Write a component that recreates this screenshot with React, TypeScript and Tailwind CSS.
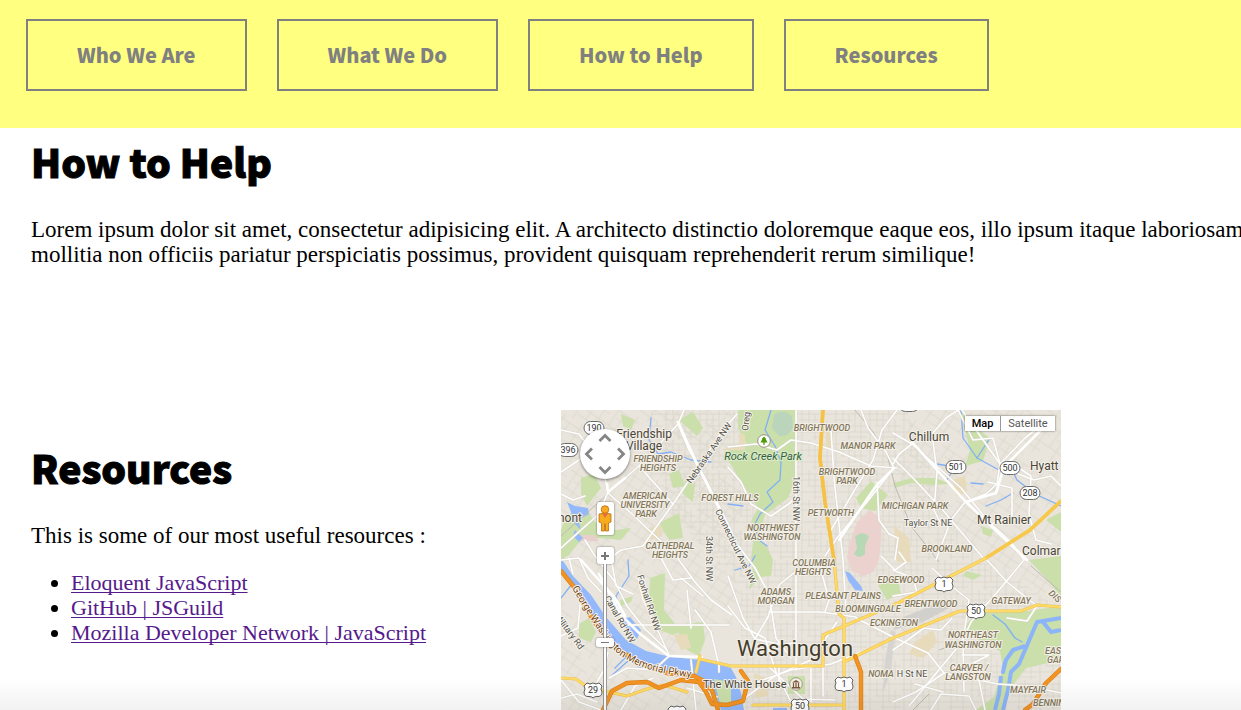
import React from "react";

const navItems = [
  { label: "Who We Are", href: "#who-we-are" },
  { label: "What We Do", href: "#what-we-do" },
  { label: "How to Help", href: "#how-to-help" },
  { label: "Resources", href: "#resources" },
];

const resourceLinks = [
  { label: "Eloquent JavaScript", href: "#eloquent-javascript" },
  { label: "GitHub | JSGuild", href: "#github-jsguild" },
  { label: "Mozilla Developer Network | JavaScript", href: "#mdn-javascript" },
];

const parks = [
  "M177 0H235V68L227 88L204 105L197 128L190 111L197 98L180 71L167 50V41L187 36L177 18Z",
  "M193 128L205 135L212 150L210 166L199 167L188 180L192 160L190 148Z",
  "M89 168L104 163L103 200L115 215L130 217L112 225L98 220L88 190Z",
  "M114 215L142 212L144 230L138 246L126 240Z",
  "M417 203L460 202L500 196V250L465 258L452 275L442 300H415L433 287L442 258L439 241L409 225L404 215Z",
  "M468 150L500 146V187L485 168Z",
  "M399 0H402L415 18L429 28L422 51L404 56L409 40Z",
  "M332 73L352 68L375 68L389 74L370 75L350 73L334 78Z",
  "M295 88L310 71L327 85L314 101L300 98Z",
  "M3 112L14 98L26 100L34 112L55 120L70 118L60 130L38 128L20 130L8 145L0 150V120Z",
  "M20 68L33 64L40 78L26 96L20 84Z",
  "M108 64L118 60L124 76L112 78Z",
  "M124 70L134 74L132 92L122 84Z",
  "M98 113L118 103L122 128L108 130Z",
  "M18 214L28 208L35 222L30 232L18 228Z",
  "M59 190L72 186L70 192L60 196Z",
  "M153 270L170 268V295L158 292Z",
  "M227 266H244V284H227Z",
  "M317 175L337 170L340 184L326 190Z",
  "M405 161L421 165L412 170L402 166Z",
  "M420 116L432 120L430 127L422 124Z",
  "M60 4L74 10L70 20L62 16Z",
  "M118 10L132 2L142 18L136 26Z",
  "M485 110L500 102V122Z",
];

const sand = [
  "M86 119L100 114L101 126L90 130Z",
  "M113 225L126 224L130 238L120 240Z",
  "M354 232L372 220L376 232L362 248L348 244Z",
  "M265 22H272V38H265Z",
  "M391 70L404 66L406 82L396 86Z",
  "M333 116L348 128L350 152H336Z",
  "M160 40L178 34V24H184V40Z",
  "M193 263L205 268L207 286L194 288Z",
];

const water = [
  "M0 148L12 166L30 185L45 207L65 230L85 241L110 247L140 250L170 258L175 267L180 283L183 300H160L152 278L136 266L105 263L80 259L60 245L40 224L25 196L8 173L0 162Z",
  "M62 209L69 207L80 220L76 229L64 217Z",
  "M284 161L289 163L300 176L302 181L294 180L287 170Z",
  "M6 92L14 96L27 98L28 104L17 110L20 120L12 112L10 102Z",
  "M14 120L22 128L18 132L12 126Z",
  "M212 298H226V300H212Z",
];

const minorRoads = [
  "M0 20L18 24L30 40L42 60L47 82L38 104L20 120L0 138",
  "M47 83L78 56L117 14L123 0",
  "M117 14L128 40L146 72L166 112L176 134L194 158",
  "M47 83L70 103L91 123L82 136L60 140L52 146",
  "M91 123L112 94L135 60L162 20L176 4",
  "M78 56L112 94",
  "M91 123L112 142L134 172L150 190L171 205",
  "M0 62L18 50L30 40M0 84L12 90L24 86",
  "M0 150L18 148L27 168L40 182",
  "M77 168L82 190L93 212L108 245",
  "M66 215H168M126 180L130 218M120 168L142 186M134 200L150 222L158 256V262",
  "M24 130L34 146L54 172L66 196L84 219L106 240",
  "M50 148L55 176L72 184M100 148L112 170L130 168",
  "M235 0V260",
  "M167 37L195 34L216 40L230 30L250 33L278 42L310 56L336 58",
  "M167 57L180 72L190 94L210 106L229 93L235 86",
  "M300 0L307 18L325 42L333 58",
  "M336 0L321 20L312 50L296 76L270 120",
  "M333 58L306 92L276 128L264 146",
  "M270 20L273 68L282 150L285 200",
  "M316 72L318 110L328 124L337 128L334 150",
  "M320 146L334 160L345 152L338 142",
  "M167 166L182 208L194 229L218 234L234 233",
  "M194 229L207 207L218 175L234 162",
  "M167 196L184 218L204 228L215 262L234 300",
  "M208 202L260 202L295 207M260 160L268 190L264 202",
  "M194 158L208 184L215 228L230 248",
  "M181 290L214 266L250 250L276 212",
  "M196 272L230 260L270 254L300 242",
  "M208 257L242 289L274 290M218 257V280M250 257V292M262 257V286",
  "M295 208L334 228L367 243L383 263L437 274L467 276L500 283",
  "M332 23L351 34L400 78L427 111L450 132L463 150",
  "M332 48L352 68L380 98L412 136L424 150",
  "M332 54L338 44L351 34M371 24L385 8L397 0",
  "M397 0L412 30L432 28L439 54L436 74L425 84L404 92L390 110L375 150",
  "M439 54L464 28L492 6M455 56L470 66L468 104L475 130L490 134",
  "M427 72L451 78L451 108L430 114M371 24L376 62L373 100L380 114",
  "M439 54L452 62L473 70L490 66L500 76M401 0L439 54",
  "M371 158L388 174L408 190L402 232L403 282",
  "M426 150L446 172L476 196L466 211L446 208",
  "M463 150L438 180L410 212L401 232L348 296",
  "M332 240L348 229L363 218L380 220L391 208",
  "M332 186L356 182L352 168L332 160",
  "M401 245H428L403 258M383 263L355 282L332 292",
  "M0 270L18 292L40 300M48 268L66 258L93 260L108 246",
  "M0 288L16 284L36 292M60 300L74 276L92 268M130 250L135 300M126 278L156 287",
  "M20 185L17 218L0 226M8 148L12 164M47 242L43 260L36 272",
  "M370 300L380 284L408 286L415 300M418 270L424 300M354 274L382 282",
];

const majorRoads = [
  "M46 74L47 82L64 68M117 12L136 54L170 122",
  "M38 164L60 205L78 223L108 246L141 247",
  "M333 58L315 76L278 130",
  "M351 32L404 91L466 150",
  "M405 92L435 83L443 57M443 57L492 8",
  "M20 150L54 188L64 206",
];

const yellowRoads = [
  "M262 0L259 48L264 92L273 150L278 204L283 208V300",
  "M138 249L170 256H262V225L337 193L425 148L469 120L500 91",
  "M283 252L332 228L399 201H460L476 195L500 197",
  "M0 268L15 269L26 277L44 281L66 286L86 279L103 275L126 282",
  "M192 295H283",
  "M139 246L135 262",
];

const orangeRoads = [
  "M0 161L13 177L24 197L40 222L58 240L80 254L106 263L133 266L143 271",
  "M42 300L51 281L66 273L86 272L98 278L120 270L138 272L145 282L151 294L166 295L182 291L187 271L180 261",
  "M138 272L151 280L157 300",
  "M294 246L300 262V300",
  "M500 259L485 273L472 294L464 300",
];

const creeks = [
  "M210 0L204 20L214 36L220 52L219 70L206 82L212 92L199 104L193 116L198 130L206 136",
  "M400 0L402 28L416 48L438 60L450 58L456 70L474 84L500 96",
  "M429 28L416 48M370 53L394 57L386 70M425 96L440 90L452 83",
  "M410 73L422 74M67 150L68 166L55 186L57 196",
  "M0 188L14 170M54 258L64 248",
  "M90 8L88 30L97 44L110 42L130 50L150 52",
  "M48 268L68 250M432 205L444 214L454 228L461 232",
  "M167 94L182 96M174 160L188 156L194 146",
];

type AreaLabel = { x: number; y: number; text: string; anchor?: "start" | "middle" | "end" };

const areaLabels: AreaLabel[] = [
  { x: 97, y: 52, text: "FRIENDSHIP" },
  { x: 97, y: 61, text: "HEIGHTS" },
  { x: 84, y: 89, text: "AMERICAN" },
  { x: 84, y: 98, text: "UNIVERSITY" },
  { x: 85, y: 107, text: "PARK" },
  { x: 109, y: 139, text: "CATHEDRAL" },
  { x: 109, y: 148, text: "HEIGHTS" },
  { x: 169, y: 91, text: "FOREST HILLS" },
  { x: 261, y: 21, text: "BRIGHTWOOD" },
  { x: 307, y: 39, text: "MANOR PARK" },
  { x: 286, y: 65, text: "BRIGHTWOOD" },
  { x: 286, y: 74, text: "PARK" },
  { x: 270, y: 106, text: "PETWORTH" },
  { x: 212, y: 121, text: "NORTHWEST" },
  { x: 211, y: 130, text: "WASHINGTON" },
  { x: 354, y: 99, text: "MICHIGAN PARK" },
  { x: 386, y: 142, text: "BROOKLAND" },
  { x: 253, y: 156, text: "COLUMBIA" },
  { x: 252, y: 165, text: "HEIGHTS" },
  { x: 215, y: 185, text: "ADAMS" },
  { x: 215, y: 194, text: "MORGAN" },
  { x: 282, y: 189, text: "PLEASANT PLAINS" },
  { x: 307, y: 202, text: "BLOOMINGDALE" },
  { x: 340, y: 173, text: "EDGEWOOD" },
  { x: 333, y: 216, text: "ECKINGTON" },
  { x: 370, y: 197, text: "BRENTWOOD" },
  { x: 450, y: 194, text: "GATEWAY" },
  { x: 412, y: 228, text: "NORTHEAST" },
  { x: 412, y: 238, text: "WASHINGTON" },
  { x: 408, y: 261, text: "CARVER /" },
  { x: 407, y: 270, text: "LANGSTON" },
  { x: 320, y: 267, text: "NOMA" },
  { x: 484, y: 244, text: "EAS", anchor: "start" },
  { x: 486, y: 253, text: "GAR", anchor: "start" },
  { x: 467, y: 283, text: "MAYFAIR" },
  { x: 472, y: 296, text: "BENNIN", anchor: "start" },
];

const stateRoutes = [
  { x: 7, y: 40, n: "396" },
  { x: 33, y: 18, n: "190" },
  { x: 395, y: 57, n: "501" },
  { x: 449, y: 58, n: "500" },
  { x: 469, y: 83, n: "208" },
  { x: 348, y: -5, n: "" },
];

const usRoutes = [
  { x: 383, y: 174, n: "1" },
  { x: 415, y: 201, n: "50" },
  { x: 283, y: 274, n: "1" },
  { x: 239, y: 296, n: "50" },
  { x: 32, y: 280, n: "29" },
  { x: 116, y: 303, n: "" },
];

function Lines({ paths, className, width }: { paths: string[]; className: string; width: number }) {
  return (
    <g className={className} fill="none" strokeWidth={width} strokeLinejoin="round" strokeLinecap="round">
      {paths.map((d) => (
        <path key={d} d={d} />
      ))}
    </g>
  );
}

function MapDrawing() {
  return (
    <svg
      viewBox="0 0 500 300"
      className="block w-full font-['Roboto',sans-serif]"
      role="img"
      aria-label="Map of Washington"
    >
      <defs>
        <pattern id="streets" width="34" height="30" patternUnits="userSpaceOnUse">
          <path
            d="M0 4H34M0 10H20M8 16H34M0 22H34M14 27H34M3 0V30M10 0V16M16 4V30M22 0V22M28 10V30"
            fill="none"
            stroke="#d9d4ca"
            strokeWidth="0.7"
          />
        </pattern>
        <pattern id="lanes" width="42" height="38" patternUnits="userSpaceOnUse" patternTransform="rotate(34)">
          <path
            d="M0 6H30M8 14H42M0 24H42M16 32H42M6 0V24M14 6V38M26 0V32M36 14V38"
            fill="none"
            stroke="#dad5cb"
            strokeWidth="0.7"
          />
        </pattern>
        <path id="parkway" d="M11 178C20 194 24 200 32 212C42 228 48 236 60 246C78 258 96 264 138 268" />
      </defs>
      <rect width="500" height="300" fill="#e9e5dc" />
      <path d="M0 0H180V210L100 250L0 140ZM0 190L60 260L140 275V300H0Z" fill="url(#lanes)" />
      <path d="M345 0H500V200L400 130L330 60Z" fill="url(#lanes)" />
      <path d="M90 0H345L400 130L500 200V300H180V180L90 80Z" fill="url(#streets)" />
      <g fill="#cadfaa">
        {parks.map((d) => (
          <path key={d} d={d} />
        ))}
      </g>
      <g fill="#e8dbbb">
        {sand.map((d) => (
          <path key={d} d={d} />
        ))}
      </g>
      <path
        d="M289 132L296 112L309 100L320 109L320 130L318 150L312 162L302 166L291 161L286 148Z"
        fill="#ebd2cf"
      />
      <path d="M18 125H34L38 131H18Z" fill="#e9cfcc" />
      <path d="M213 5Q222 -2 231 6L232 18Q226 28 218 26L211 18Z" fill="#bbd5bd" />
      <path d="M294 127Q300 120 308 126L304 136L304 144Q298 150 293 144L296 138Z" fill="#b7d8b5" />
      <path d="M340 208L380 192L396 194L362 212L332 220Z" fill="#d2d0cc" />
      <path d="M324 250L330 220L334 222L330 262L322 282Z" fill="#d6d4d0" />
      <Lines paths={creeks} className="stroke-[#82b0f5]" width={1.3} />
      <g fill="#93b9fa">
        {water.map((d) => (
          <path key={d} d={d} />
        ))}
      </g>
      <path d="M153 269L170 272V294L159 294Z" fill="#cadfaa" />
      <path
        d="M500 208L476 212L470 226L464 240L458 254L450 262L447 280L442 300M464 236L452 240L445 250L442 262L444 252M440 266L438 284L434 300M482 212L490 222L500 220"
        fill="none"
        stroke="#8cb4f8"
        strokeWidth="4"
        strokeLinejoin="round"
      />
      <path
        d="M294 0L312 22L326 44L334 76L350 116L378 152M0 126L18 110L47 84M470 156L500 182M352 300L368 284M400 232L378 240"
        fill="none"
        stroke="#bdbab4"
        strokeWidth="1"
      />
      <Lines paths={minorRoads} className="stroke-[#d9d4c9]" width={2.4} />
      <Lines paths={minorRoads} className="stroke-white" width={1.6} />
      <Lines paths={majorRoads} className="stroke-white" width={2.6} />
      <Lines paths={yellowRoads} className="stroke-[#eebf52]" width={3.2} />
      <Lines paths={yellowRoads} className="stroke-[#fedb64]" width={2.2} />
      <path d="M262 0L259 48L264 92L273 150" fill="none" stroke="#f7c244" strokeWidth="3.6" />
      <path d="M425 148L469 120L500 91" fill="none" stroke="#f7c84a" strokeWidth="3.6" />
      <Lines paths={orangeRoads} className="stroke-[#dd7f16]" width={4.4} />
      <Lines paths={orangeRoads} className="stroke-[#f29423]" width={3.2} />

      <g
        className="text-[9px] font-medium italic"
        fill="#83775b"
        stroke="#f3f0e9"
        strokeWidth="2"
        strokeLinejoin="round"
        paintOrder="stroke"
      >
        {areaLabels.map((l) => (
          <text key={l.text + l.x + l.y} x={l.x} y={l.y} textAnchor={l.anchor ?? "middle"}>
            {l.text}
          </text>
        ))}
        <text transform="translate(487 184) rotate(42)">DIS</text>
      </g>

      <g
        className="text-[12px]"
        fill="#4b4537"
        stroke="#f3f0e9"
        strokeWidth="2"
        strokeLinejoin="round"
        paintOrder="stroke"
      >
        <text x="111" y="28" textAnchor="end">Friendship</text>
        <text x="101" y="40" textAnchor="end">Village</text>
        <text x="21" y="112" textAnchor="end">mont</text>
        <text x="368" y="31" textAnchor="middle">Chillum</text>
        <text x="469" y="60">Hyatt</text>
        <text x="443" y="114" textAnchor="middle">Mt Rainier</text>
        <text x="461" y="145">Colmar</text>
        <text x="234" y="246" textAnchor="middle" className="text-[22px]" fill="#443d2c">
          Washington
        </text>
        <text x="142" y="278" className="text-[11px]">The White House</text>
      </g>

      <g
        className="text-[9px]"
        fill="#57534a"
        stroke="#f6f4ee"
        strokeWidth="2"
        strokeLinejoin="round"
        paintOrder="stroke"
      >
        <text x="367" y="116" textAnchor="middle">Taylor St NE</text>
        <text x="351" y="267" textAnchor="middle">H St NE</text>
        <text transform="translate(130 74) rotate(-55)">Nebraska Ave NW</text>
        <text transform="translate(154 101) rotate(64)">Connecticut Ave NW</text>
        <text transform="translate(145 126) rotate(90)">34th St NW</text>
        <text transform="translate(232 66) rotate(90)">16th St NW</text>
        <text transform="translate(187 21) rotate(-84)">Oreg</text>
        <text transform="translate(76 166) rotate(72)">Foxhall Rd NW</text>
        <text transform="translate(43 188) rotate(60)">Canal Rd NW</text>
        <text transform="translate(-7 206) rotate(53)">Military Rd</text>
        <text className="text-[10px]" fill="#75440f">
          <textPath href="#parkway">George Washington Memorial Pkwy</textPath>
        </text>
      </g>

      <text
        x="202"
        y="50"
        textAnchor="middle"
        className="text-[11px] italic"
        fill="#33613f"
        stroke="#dcebc8"
        strokeWidth="2"
        paintOrder="stroke"
      >
        Rock Creek Park
      </text>
      <circle cx="203" cy="31" r="6.3" fill="#fff" stroke="#9a937c" strokeWidth="1" />
      <path d="M203 26.5L205.3 29H204.7L206.5 32.5H203.6V35H202.4V32.5H199.5L201.3 29H200.7Z" fill="#4d9a08" />
      <circle cx="235" cy="274" r="6.3" fill="#f4f0e6" stroke="#a39b87" strokeWidth="1" />
      <path d="M231 272.500L235 270L239 272.500ZM231 277H239V278.500H231Z" fill="#7c573d" />
      <path d="M232.500 273V277M235 273V277M237.500 273V277" stroke="#7c573d" strokeWidth="1.2" />

      <g className="text-[9px]" fill="#333" textAnchor="middle">
        {stateRoutes.map((r) => (
          <g key={r.n + r.x}>
            <rect x={r.x - 10} y={r.y - 6.5} width="20" height="13" rx="6.5" fill="#fff" stroke="#6b6b6b" />
            <text x={r.x} y={r.y + 3}>{r.n}</text>
          </g>
        ))}
        {usRoutes.map((r) => (
          <g key={r.n + r.x}>
            <path
              transform={`translate(${r.x} ${r.y})`}
              d="M-6-7Q-3-5 0-7Q3-5 6-7L9-4Q7-1 9 2Q9 7 4 6.500Q1 6.500 0 8Q-1 6.500-4 6.500Q-9 7-9 2Q-7-1-9-4Z"
              fill="#fff"
              stroke="#626262"
            />
            <text x={r.x} y={r.y + 3}>{r.n}</text>
          </g>
        ))}
      </g>
    </svg>
  );
}

const panArrows = [
  { name: "Pan up", cell: "col-start-2 row-start-1", d: "M2.500 10L8 4.500L13.500 10" },
  { name: "Pan left", cell: "col-start-1 row-start-2", d: "M10 2.500L4.500 8L10 13.500" },
  { name: "Pan right", cell: "col-start-3 row-start-2", d: "M6 2.500L11.500 8L6 13.500" },
  { name: "Pan down", cell: "col-start-2 row-start-3", d: "M2.500 6L8 11.500L13.500 6" },
];

function MapControls() {
  return (
    <>
      <div className="absolute top-1 left-[19px] flex w-[50px] flex-col items-center pt-[15px]">
        <div className="grid size-[50px] grid-cols-3 grid-rows-3 place-items-center rounded-full bg-white p-[2px] shadow-[0_1px_3px_rgba(0,0,0,0.5)]">
          {panArrows.map((a) => (
            <button key={a.name} type="button" aria-label={a.name} className={`size-4 ${a.cell}`}>
              <svg viewBox="0 0 16 16" className="size-4" fill="none" stroke="#858585" strokeWidth="2.8">
                <path d={a.d} />
              </svg>
            </button>
          ))}
        </div>
        <button
          type="button"
          aria-label="Street View"
          className="mt-[23px] flex h-[33px] w-[17px] items-center justify-center rounded-[2px] bg-white shadow-[0_0_2px_rgba(0,0,0,0.6)]"
        >
          <svg viewBox="0 0 14 28" className="h-7 w-[14px]" stroke="#bd6c0c" strokeWidth="0.8">
            <path d="M1 9Q7 7 13 9V17L10.500 18V26H7.500V19H6.500V26H3.500V18L1 17Z" fill="#f6ac1d" />
            <path d="M4 8.500L7 13L10 8.500Z" fill="#ea6b43" stroke="none" />
            <circle cx="7" cy="4.500" r="3.800" fill="#f9aa22" />
          </svg>
        </button>
        <button
          type="button"
          aria-label="Zoom in"
          className="mt-3 flex size-[17px] items-center justify-center rounded-[2px] bg-white shadow-[0_0_2px_rgba(0,0,0,0.6)]"
        >
          <svg viewBox="0 0 10 10" className="size-[10px]" stroke="#777" strokeWidth="2">
            <path d="M1 5H9M5 1V9" />
          </svg>
        </button>
      </div>
      <input
        type="range"
        aria-label="Zoom level"
        defaultValue={46}
        className="absolute top-[154px] bottom-0 left-[35px] w-[18px] appearance-none bg-[linear-gradient(to_right,transparent_7px,#999_7px,#999_8px,#fff_8px,#fff_10px,#999_10px,#999_11px,transparent_11px)] [direction:rtl] [writing-mode:vertical-lr] [&::-webkit-slider-thumb]:h-[9px] [&::-webkit-slider-thumb]:w-[18px] [&::-webkit-slider-thumb]:appearance-none [&::-webkit-slider-thumb]:rounded-[2px] [&::-webkit-slider-thumb]:bg-[linear-gradient(#777,#777)] [&::-webkit-slider-thumb]:bg-[length:8px_1px] [&::-webkit-slider-thumb]:bg-center [&::-webkit-slider-thumb]:bg-no-repeat [&::-webkit-slider-thumb]:bg-white [&::-webkit-slider-thumb]:shadow-[0_0_2px_rgba(0,0,0,0.6)]"
      />
      <div className="absolute top-[6px] right-[6px] flex h-[15px] bg-white font-['Roboto',sans-serif] text-[11px] leading-[15px] shadow-[0_0_2px_rgba(0,0,0,0.6)]">
        <button type="button" className="w-9 border-r border-[#999] font-medium text-black">
          Map
        </button>
        <button type="button" className="w-[54px] text-[#565656]">
          Satellite
        </button>
      </div>
    </>
  );
}

function SectionTitle({ children }: { children: React.ReactNode }) {
  return (
    <h1 className="font-['Noto_Sans_CJK_SC',sans-serif] text-[39px] leading-[52px] font-black [-webkit-text-stroke:1px_black]">
      {children}
    </h1>
  );
}

export default function App() {
  return (
    <div className="relative min-h-screen overflow-hidden bg-white font-['Gentium_Book_Basic','Liberation_Serif',serif] text-[22px] leading-[25px] text-black">
      <header className="bg-[#ffff80] px-[26px] pt-[19px] pb-[37px]">
        <nav className="flex gap-[30px]">
          {navItems.map((item) => (
            <a
              key={item.label}
              href={item.href}
              className="border-2 border-[#808080] px-[49px] py-5 font-['Noto_Sans_CJK_SC',sans-serif] text-[20px] leading-7 font-black whitespace-nowrap text-[#808080]"
            >
              {item.label}
            </a>
          ))}
        </nav>
      </header>

      <main className="pl-[31px]">
        <section id="how-to-help" className="h-[282px] pt-[7px]">
          <SectionTitle>How to Help</SectionTitle>
          <p className="mt-[30px] text-[23px] leading-[25px] whitespace-nowrap">
            Lorem ipsum dolor sit amet, consectetur adipisicing elit. A architecto distinctio doloremque eaque eos, illo
            ipsum itaque laboriosam,
            <br />
            mollitia non officiis pariatur perspiciatis possimus, provident quisquam reprehenderit rerum similique!
          </p>
        </section>

        <section id="resources" className="grid grid-cols-[530px_500px]">
          <div className="pt-[31px]">
            <SectionTitle>Resources</SectionTitle>
            <p className="mt-[30px] text-[23px] leading-[25px]">This is some of our most useful resources :</p>
            <ul className="mt-[22px] list-disc pl-10">
              {resourceLinks.map((link) => (
                <li key={link.label}>
                  <a
                    href={link.href}
                    className="text-[#551a8b] underline decoration-1 underline-offset-2 [text-decoration-skip-ink:none]"
                  >
                    {link.label}
                  </a>
                </li>
              ))}
            </ul>
          </div>
          <div className="relative overflow-hidden">
            <MapDrawing />
            <MapControls />
          </div>
        </section>
      </main>
      <div className="pointer-events-none absolute inset-x-0 bottom-0 h-8 bg-linear-to-t from-black/5 to-transparent" />
    </div>
  );
}
